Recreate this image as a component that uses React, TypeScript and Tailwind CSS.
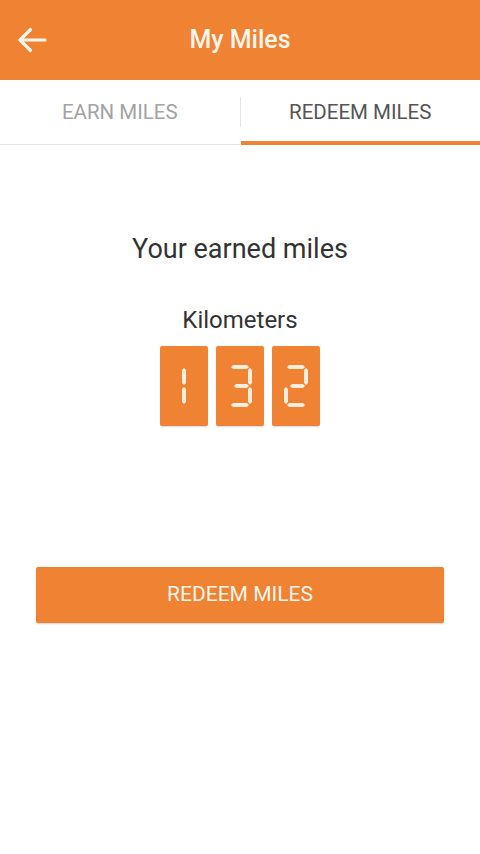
import React from "react";

const SEG_COLOR = "#fdeedb";

// horizontal and vertical segment helpers for the seven-segment digits
function hSeg(x1: number, x2: number, cy: number) {
  return `${x1},${cy} ${x1 + 2},${cy - 2} ${x2 - 2},${cy - 2} ${x2},${cy} ${x2 - 2},${cy + 2} ${x1 + 2},${cy + 2}`;
}
function vSeg(cx: number, y1: number, y2: number) {
  return `${cx},${y1} ${cx + 2},${y1 + 2} ${cx + 2},${y2 - 2} ${cx},${y2} ${cx - 2},${y2 - 2} ${cx - 2},${y1 + 2}`;
}

const SEGMENTS: Record<string, string> = {
  a: hSeg(3, 21, 2),
  b: vSeg(22, 3, 20),
  c: vSeg(22, 22, 39),
  d: hSeg(3, 21, 40),
  e: vSeg(2, 22, 39),
  f: vSeg(2, 3, 20),
  g: hSeg(6, 21, 21),
};

const DIGIT_MAP: Record<string, string[]> = {
  "1": ["b", "c"],
  "2": ["a", "b", "g", "e", "d"],
  "3": ["a", "b", "g", "c", "d"],
};

function Digit({ value }: { value: string }) {
  const segs = DIGIT_MAP[value] ?? [];
  const isOne = value === "1";
  return (
    <div className="flex h-[80px] w-[48px] items-center justify-center rounded-[2px] bg-[#f08234] shadow-[0_1px_1px_rgba(0,0,0,0.15)]">
      <svg
        width={isOne ? 6 : 24}
        height={42}
        viewBox={isOne ? "19 0 6 42" : "0 0 24 42"}
      >
        {segs.map((s) => (
          <polygon key={s} points={SEGMENTS[s]} fill={SEG_COLOR} />
        ))}
      </svg>
    </div>
  );
}

export default function App() {
  const miles = "132";

  return (
    <div
      className="flex min-h-[854px] w-[480px] flex-col bg-white"
      style={{ fontFamily: "Roboto, 'Noto Sans', sans-serif" }}
    >
      {/* app bar */}
      <div className="relative flex h-[80px] items-center justify-center bg-[#f08234]">
        <button className="absolute left-[16px] top-[26px] p-0">
          <svg width="32" height="28" viewBox="0 0 32 28" fill="none">
            <path
              d="M29 14H4M14.5 3.5L4 14l10.5 10.5"
              stroke="#fff6ea"
              strokeWidth="3.2"
              strokeLinecap="round"
              strokeLinejoin="round"
            />
          </svg>
        </button>
        <h1 className="text-[25px] font-medium text-[#fff6ea]">My Miles</h1>
      </div>

      {/* tabs */}
      <div className="flex h-[65px] border-b border-[#e6e6e6]">
        <div className="my-[17px] flex flex-1 items-center justify-center border-r border-[#e4e4e4]">
          <span className="text-[20.5px] text-[#a3a3a3]">EARN MILES</span>
        </div>
        <div className="relative flex flex-1 items-center justify-center">
          <span className="text-[20.5px] text-[#555555]">REDEEM MILES</span>
          <div className="absolute bottom-[-1px] left-0 right-0 h-[4px] bg-[#f08234]" />
        </div>
      </div>

      {/* content */}
      <div className="flex flex-col items-center">
        <p className="mt-[87px] text-[27px] leading-[34px] text-[#333333]">
          Your earned miles
        </p>
        <p className="mt-[39px] text-[24px] leading-[30px] text-[#333333]">
          Kilometers
        </p>
        <div className="mt-[11px] flex gap-[8px]">
          {miles.split("").map((d, i) => (
            <Digit key={i} value={d} />
          ))}
        </div>
        <button className="mt-[141px] flex h-[56px] w-[408px] items-center justify-center rounded-[2px] bg-[#f08234] shadow-[0_1px_2px_rgba(0,0,0,0.2)]">
          <span className="text-[21px] text-[#fff6ea]">REDEEM MILES</span>
        </button>
      </div>
    </div>
  );
}
